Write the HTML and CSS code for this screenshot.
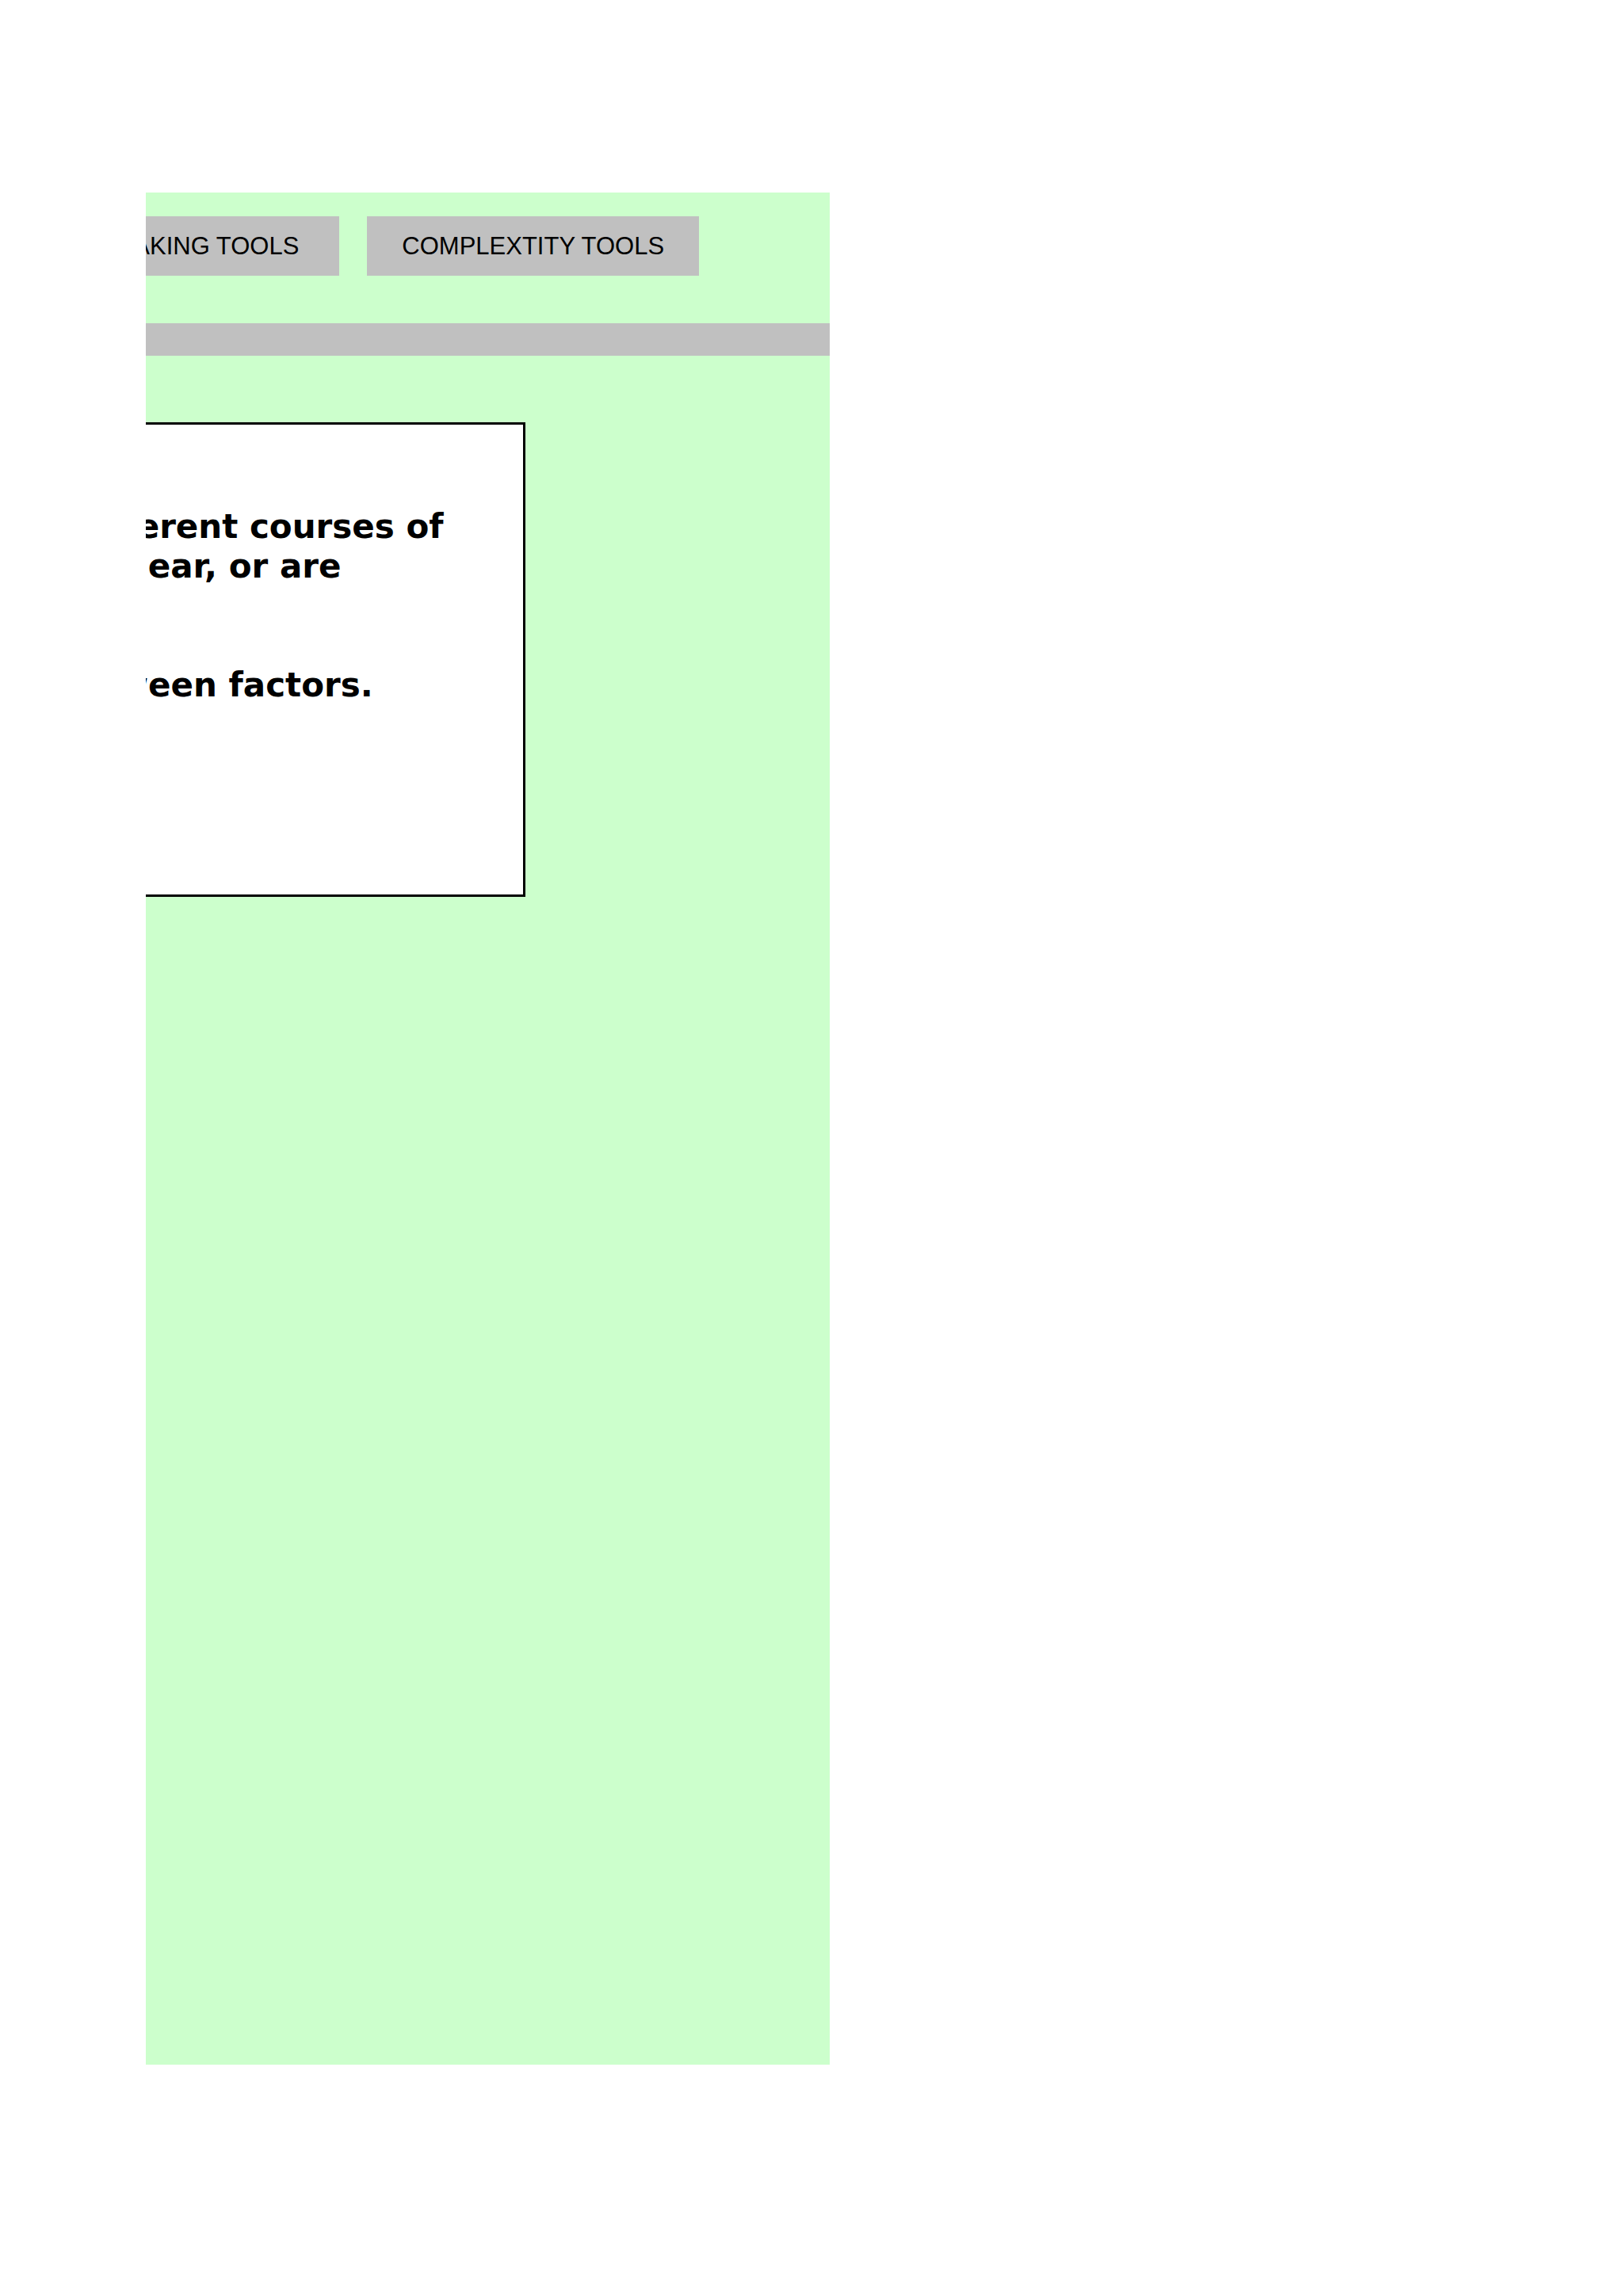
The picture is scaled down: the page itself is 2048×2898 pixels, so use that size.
FILE: index.html
```html
<!DOCTYPE html>
<html lang="en">
<head>
<meta charset="utf-8">
<title>Complexity Tools</title>
<link rel="stylesheet" href="styles.css">
</head>
<body>
<div class="panel">
  <div class="track">
    <nav class="tabs">
      <a class="tab tab-first" href="#">DECISION MAKING TOOLS</a>
      <a class="tab" href="#">COMPLEXTITY TOOLS</a>
    </nav>
    <div class="bar"></div>
    <section class="card">
      <p class="lead">when there are many different courses of<br>action, outcomes are unclear, or are</p>
      <p class="lead second">and the interactions between factors.</p>
    </section>
  </div>
</div>
</body>
</html>
```

FILE: styles.css
```css
html, body {
  margin: 0;
  padding: 0;
  background: #ffffff;
}

body {
  height: 2898px;
  font-family: "Liberation Sans", Arial, sans-serif;
}

.panel {
  margin: 243px 0 0 184px;
  width: 863px;
  height: 2363px;
  background: #ccffcc;
  overflow: hidden;
}

.track {
  margin-left: -700px;
}

.tabs {
  display: flex;
  gap: 35px;
  padding: 30px 0 0 456px;
}

.tab {
  display: flex;
  align-items: center;
  height: 75px;
  padding: 0 44px;
  background: #c0c0c0;
  color: #000000;
  text-decoration: none;
  font-size: 31px;
  white-space: nowrap;
}

.tab-first {
  padding-right: 51px;
}

.bar {
  margin-top: 60px;
  height: 41px;
  background: #c0c0c0;
}

.card {
  margin: 84px 0 0 39px;
  width: 1134px;
  box-sizing: content-box;
  border: 3px solid #000000;
  background: #ffffff;
  padding: 104px 0 239px 48px;
  width: 1086px;
}

.lead {
  margin: 0;
  font-family: "DejaVu Sans", sans-serif;
  font-weight: bold;
  font-size: 42px;
  line-height: 50px;
  white-space: nowrap;
  color: #000000;
}

.second {
  margin-top: 100px;
}
```
